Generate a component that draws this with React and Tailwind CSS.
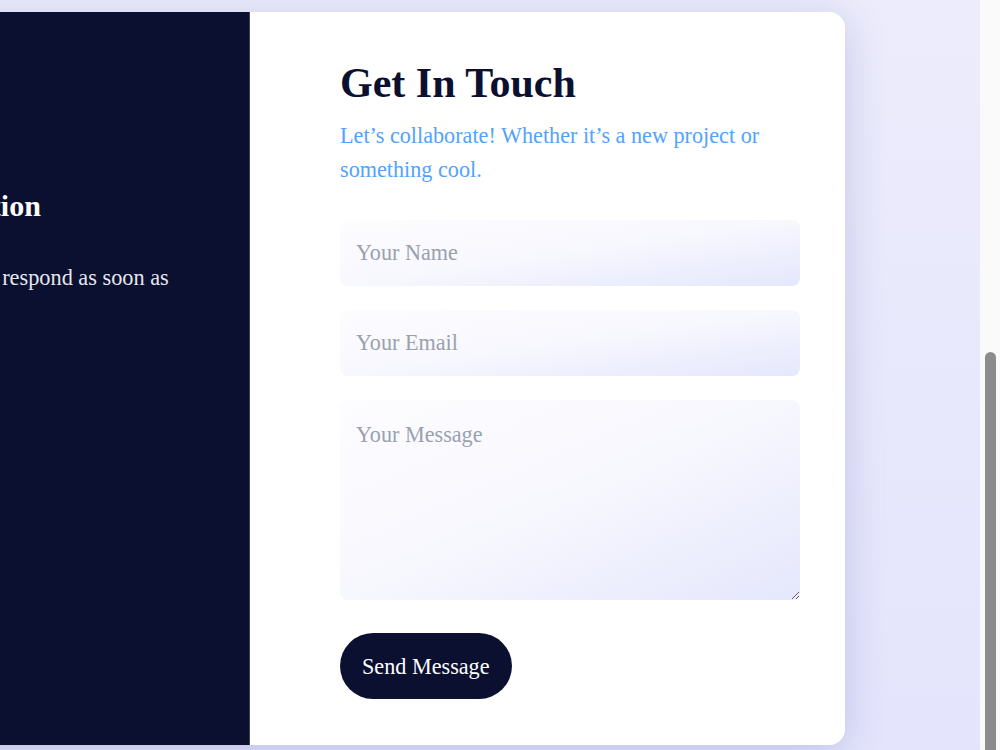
import { useState } from 'react';

export default function App() {
  const [form, setForm] = useState({ name: '', email: '', message: '' });

  const handleSubmit = (e) => {
    e.preventDefault();
  };

  const field =
    'w-full rounded-lg bg-linear-to-br from-[#fdfdff] via-[#f7f7fe] to-[#e5e7fc] px-4 text-[22.2px] text-[#0b1030] placeholder:text-gray-400 focus:outline-none';

  return (
    <div className="flex h-screen w-full overflow-hidden font-['Liberation_Serif','Times_New_Roman',serif]">
      <div className="min-w-0 flex-1 overflow-hidden bg-linear-to-b from-[#ececfc] to-[#e4e5fc] pt-3">
        <div className="ml-[-280px] flex h-[733px] w-max rounded-2xl shadow-[0_8px_40px_rgba(70,70,160,0.22)]">
          {/* info panel */}
          <div className="w-[530px] shrink-0 rounded-l-2xl border-r border-[#3a3f5c] bg-[#0b1030] px-[55px] pt-[176px]">
            <h3 className="text-[30px] leading-[1.2] font-bold whitespace-nowrap text-white">Contact Information</h3>
            <p className="mt-[37px] text-[22.3px] leading-[34px] text-gray-200">
              Leave a message and I’ll respond as soon as possible.
            </p>
          </div>

          {/* form panel */}
          <div className="w-[595px] shrink-0 rounded-r-2xl bg-white pt-[46px] pr-[45px] pl-[90px]">
            <h2 className="text-[42px] leading-[1.2] font-bold text-[#0b1030]">Get In Touch</h2>
            <p className="mt-[11px] text-[22.2px] leading-[34px] text-blue-400">
              Let’s collaborate! Whether it’s a new project or something cool.
            </p>
            <form className="mt-[33px] flex flex-col gap-6" onSubmit={handleSubmit}>
              <input
                className={`${field} h-[66px] py-5`}
                type="text"
                placeholder="Your Name"
                value={form.name}
                onChange={(e) => setForm({ ...form, name: e.target.value })}
              />
              <input
                className={`${field} h-[66px] py-5`}
                type="email"
                placeholder="Your Email"
                value={form.email}
                onChange={(e) => setForm({ ...form, email: e.target.value })}
              />
              <textarea
                className={`${field} block h-[200px] pt-[18px] pb-4`}
                placeholder="Your Message"
                value={form.message}
                onChange={(e) => setForm({ ...form, message: e.target.value })}
              />
              <button
                className="mt-[9px] h-[66px] self-start rounded-full bg-[#0b1030] px-[22px] text-[22.2px] text-white"
                type="submit"
              >
                Send Message
              </button>
            </form>
          </div>
        </div>
      </div>

      {/* scrollbar */}
      <div className="flex w-5 shrink-0 flex-col items-center justify-end bg-[#fafafa]">
        <div className="h-[398px] w-[11px] rounded-t-full bg-[#8c8c8c]" />
      </div>
    </div>
  );
}
